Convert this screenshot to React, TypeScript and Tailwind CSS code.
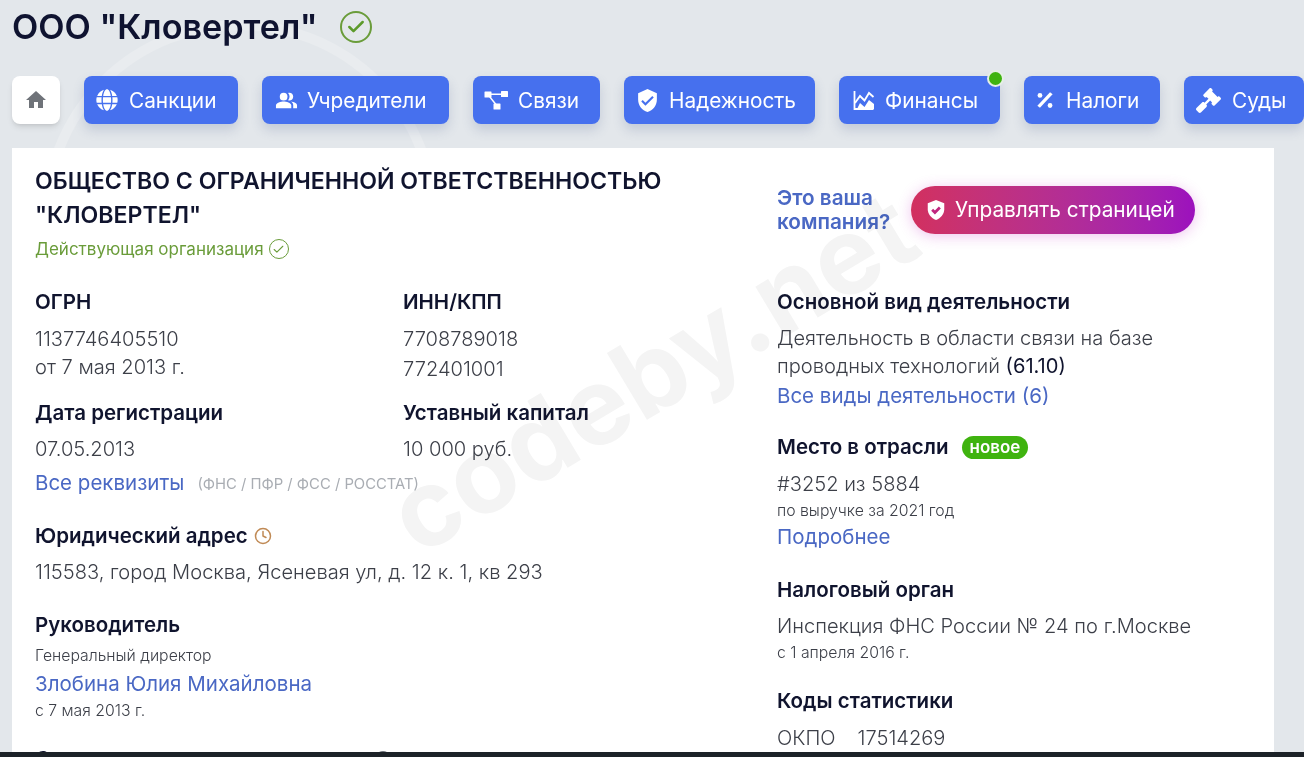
import React from "react";
import { Check, Clock } from "lucide-react";
import { FaGlobe, FaGavel } from "react-icons/fa";
import { MdPeopleAlt, MdVerifiedUser } from "react-icons/md";

const font = { fontFamily: '"Inter", "Noto Sans", sans-serif' };

function Glyph({ name }: { name: string }) {
  const c = "text-white shrink-0";
  if (name === "globe") return <FaGlobe size={22} className={c} />;
  if (name === "users") return <MdPeopleAlt size={23} className={c} />;
  if (name === "tree")
    return (
      <svg width="24" height="24" viewBox="0 0 24 24" className={c} fill="currentColor">
        <rect x="0.5" y="3.5" width="7" height="6" rx="0.6" />
        <rect x="17" y="3" width="7" height="6" rx="0.6" />
        <rect x="9.5" y="15.5" width="7" height="6" rx="0.6" />
        <path d="M7 5.5h11V7H7zM6 8l6.5 8-1.2 1L5 9z" />
      </svg>
    );
  if (name === "shield") return <MdVerifiedUser size={25} className={c} />;
  if (name === "chart")
    return (
      <svg width="24" height="24" viewBox="0 0 24 24" className={c} fill="none" stroke="currentColor" strokeWidth="1.8">
        <path d="M2.5 3v18h19" />
        <path d="m3 15 5-7 4.5 4.5L17 5l4.5 4" />
        <path fill="currentColor" stroke="none" d="m5 21 3-6 4.5 4 4.5-7 5 4v5z" />
      </svg>
    );
  if (name === "percent")
    return (
      <svg width="22" height="22" viewBox="0 0 24 24" className={c} fill="currentColor">
        <circle cx="6.5" cy="7" r="2.6" />
        <circle cx="17.5" cy="18" r="2.6" />
        <path d="m17.5 3.5 2.8 2.3L6.5 20.5l-2.8-2.3z" />
      </svg>
    );
  return <FaGavel size={25} className={c} />;
}

const tabs: { icon: string; label: string; w: string; pad: string; dot?: boolean }[] = [
  { icon: "globe", label: "Санкции", w: "w-[154px]", pad: "pl-[12px] gap-[11px]" },
  { icon: "users", label: "Учредители", w: "w-[187px]", pad: "pl-[13px] gap-[9px]" },
  { icon: "tree", label: "Связи", w: "w-[127px]", pad: "pl-[11px] gap-[10px]" },
  { icon: "shield", label: "Надежность", w: "w-[191px]", pad: "pl-[11px] gap-[9px]" },
  { icon: "chart", label: "Финансы", w: "w-[161px]", pad: "pl-[13px] gap-[9px]", dot: true },
  { icon: "percent", label: "Налоги", w: "w-[136px]", pad: "pl-[10px] gap-[10px]" },
  { icon: "gavel", label: "Суды", w: "w-[120px]", pad: "pl-[12px] gap-[11px]" },
];

const L = ({ children, className = "" }: { children: React.ReactNode; className?: string }) => (
  <div className={`text-[20.5px] leading-[28px] font-semibold text-[#10142e] ${className}`}>{children}</div>
);
const V = ({ children, className = "" }: { children: React.ReactNode; className?: string }) => (
  <div className={`text-[20.1px] leading-[29px] font-light text-[#3c3f48] ${className}`}>{children}</div>
);
const S = ({ children, className = "" }: { children: React.ReactNode; className?: string }) => (
  <div className={`text-[15.8px] leading-[20px] font-light text-[#3c3f48] ${className}`}>{children}</div>
);
const A = ({ children, className = "" }: { children: React.ReactNode; className?: string }) => (
  <div className={`text-[20.5px] leading-[29px] font-normal text-[#4a68c4] ${className}`}>{children}</div>
);

export default function App() {
  return (
    <div style={font} className="relative h-[757px] w-[1304px] overflow-hidden bg-[#e3e7eb] flex flex-col">
      <svg className="absolute left-0 top-0 pointer-events-none" width="1304" height="757" fill="none" stroke="#e9ecef">
        <circle cx="240" cy="219" r="194" strokeWidth="10" />
      </svg>
      <div className="relative flex-1 min-h-0 flex flex-col pl-3 pr-[30px]">
        <div className="flex items-center h-[56px] pb-[2px] gap-[22px]">
          <h1 className="text-[34.2px] font-semibold text-[#0f1330]">ООО "Кловертел"</h1>
          <span className="w-8 h-8 rounded-full border-2 border-[#6a9c3a] flex items-center justify-center">
            <Check size={20} strokeWidth={3} className="text-[#5c9a2a]" />
          </span>
        </div>
        <nav className="flex mt-[20px] gap-[24px] w-[1330px] shrink-0">
          <div className="w-[48px] h-[48px] bg-white rounded-lg shadow-md flex items-center justify-center">
            <svg width="24" height="24" viewBox="0 0 24 24" fill="#6f7379">
              <path d="M10 20v-6h4v6h5v-8h3L12 3 2 12h3v8z" />
            </svg>
          </div>
          {tabs.map((t) => (
            <div key={t.label} className={`relative ${t.w} ${t.pad} h-[48px] shrink-0 bg-[#4670ee] rounded-lg shadow-[0_6px_12px_rgba(70,90,140,0.2)] flex items-center text-white text-[20.8px]`}>
              <Glyph name={t.icon} />
              <span className="pt-[2px]">{t.label}</span>
              {t.dot && <span className="absolute -top-[6px] -right-[4px] w-[17px] h-[17px] rounded-full bg-[#3fb30f] border-2 border-[#e6efe6]" />}
            </div>
          ))}
        </nav>
        <main className="mt-[24px] flex-1 min-h-0 overflow-hidden bg-white flex pl-[23px] pt-[16px]">
          <section className="w-[742px] shrink-0">
            <div className="text-[23.1px] leading-[34px] font-semibold text-[#10142e] w-[680px]">ОБЩЕСТВО С ОГРАНИЧЕННОЙ ОТВЕТСТВЕННОСТЬЮ "КЛОВЕРТЕЛ"</div>
            <div className="flex items-center gap-[5px] mt-[5px] text-[17px] leading-[24px] text-[#6a9c3a]">
              Действующая организация
              <span className="w-5 h-5 rounded-full border-[1.5px] border-[#6a9c3a] flex items-center justify-center">
                <Check size={13} strokeWidth={2} />
              </span>
            </div>
            <div className="grid grid-cols-[368px_368px] mt-[27px]">
              <div>
                <L>ОГРН</L>
                <V className="mt-[9px]">1137746405510</V>
                <V className="-mt-[1px]">от 7 мая 2013 г.</V>
              </div>
              <div>
                <L>ИНН/КПП</L>
                <V className="mt-[9px]">7708789018</V>
                <V className="mt-[1px]">772401001</V>
              </div>
              <div className="mt-[15px]">
                <L>Дата регистрации</L>
                <V className="mt-[8px]">07.05.2013</V>
              </div>
              <div className="mt-[15px]">
                <L>Уставный капитал</L>
                <V className="mt-[8px]">10 000 руб.</V>
              </div>
            </div>
            <div className="flex items-center gap-[13px] mt-[4px]">
              <A>Все реквизиты</A>
              <span className="text-[14.8px] text-[#a9adb3] mt-[3px]">(ФНС / ПФР / ФСС / РОССТАТ)</span>
            </div>
            <L className="mt-[25px] flex items-center gap-[6px]">
              Юридический адрес <Clock size={18} className="text-[#c08a55]" />
            </L>
            <V className="mt-[8px]">115583, город Москва, Ясеневая ул, д. 12 к. 1, кв 293</V>
            <L className="mt-[24px]">Руководитель</L>
            <S className="mt-[7px]">Генеральный директор</S>
            <A className="mt-[3px]">Злобина Юлия Михайловна</A>
            <S className="mt-[3px]">с 7 мая 2013 г.</S>
            <div className="flex items-center mt-[24px] w-[356px]">
              <L>Среднесписочная численность</L>
              <span className="ml-auto w-[16px] h-[16px] rounded-full bg-[#6b7078]" />
            </div>
          </section>
          <aside className="w-[460px] shrink-0">
            <div className="flex items-center mt-[22px] gap-[20px]">
              <div className="text-[20.7px] leading-[24px] font-semibold text-[#4a68c4] w-[114px]">Это ваша компания?</div>
              <div className="w-[284px] h-[48px] rounded-full bg-gradient-to-r from-[#d2305f] to-[#9c10bd] shadow-[0_2px_14px_rgba(200,60,200,0.3)] flex items-center pl-[14px] gap-[8px] text-white text-[20.8px]">
                <svg width="22" height="22" viewBox="0 0 24 24" className="shrink-0">
                  <path fill="#fff" d="M12 1 3 4.5v6.8c0 5.4 3.8 9.8 9 11.7 5.2-1.9 9-6.3 9-11.7V4.5z" />
                  <path fill="none" stroke="#c0267e" strokeWidth="3" d="m7.8 11.8 3 3 5.4-5.6" />
                </svg>
                Управлять страницей
              </div>
            </div>
            <L className="mt-[54px]">Основной вид деятельности</L>
            <V className="mt-[8px]">Деятельность в области связи на базе</V>
            <V className="-mt-[1px]">проводных технологий <span className="font-normal text-[#10142e]">(61.10)</span></V>
            <A>Все виды деятельности (6)</A>
            <L className="mt-[23px] flex items-center gap-[13px]">
              Место в отрасли
              <span className="h-[23px] px-[8px] rounded-full bg-[#3fb30f] text-white text-[17px] leading-[23px] font-semibold">новое</span>
            </L>
            <V className="mt-[9px]">#3252 из 5884</V>
            <S className="mt-[2px]">по выручке за 2021 год</S>
            <A className="mt-[1px]">Подробнее</A>
            <L className="mt-[25px]">Налоговый орган</L>
            <V className="mt-[8px]">Инспекция ФНС России № 24 по г.Москве</V>
            <S className="mt-[2px]">с 1 апреля 2016 г.</S>
            <L className="mt-[24px]">Коды статистики</L>
            <V className="mt-[9px] flex gap-[22px]"><span>ОКПО</span><span>17514269</span></V>
          </aside>
        </main>
      </div>
      <div className="h-[5px] shrink-0 bg-[#1c2228]" />
      <div className="absolute left-[652px] top-[372px] -translate-x-1/2 -translate-y-1/2 -rotate-[31deg] text-[107px] font-bold text-[#f4f4f4] mix-blend-multiply pointer-events-none leading-none whitespace-nowrap">
        codeby.net
      </div>
    </div>
  );
}
